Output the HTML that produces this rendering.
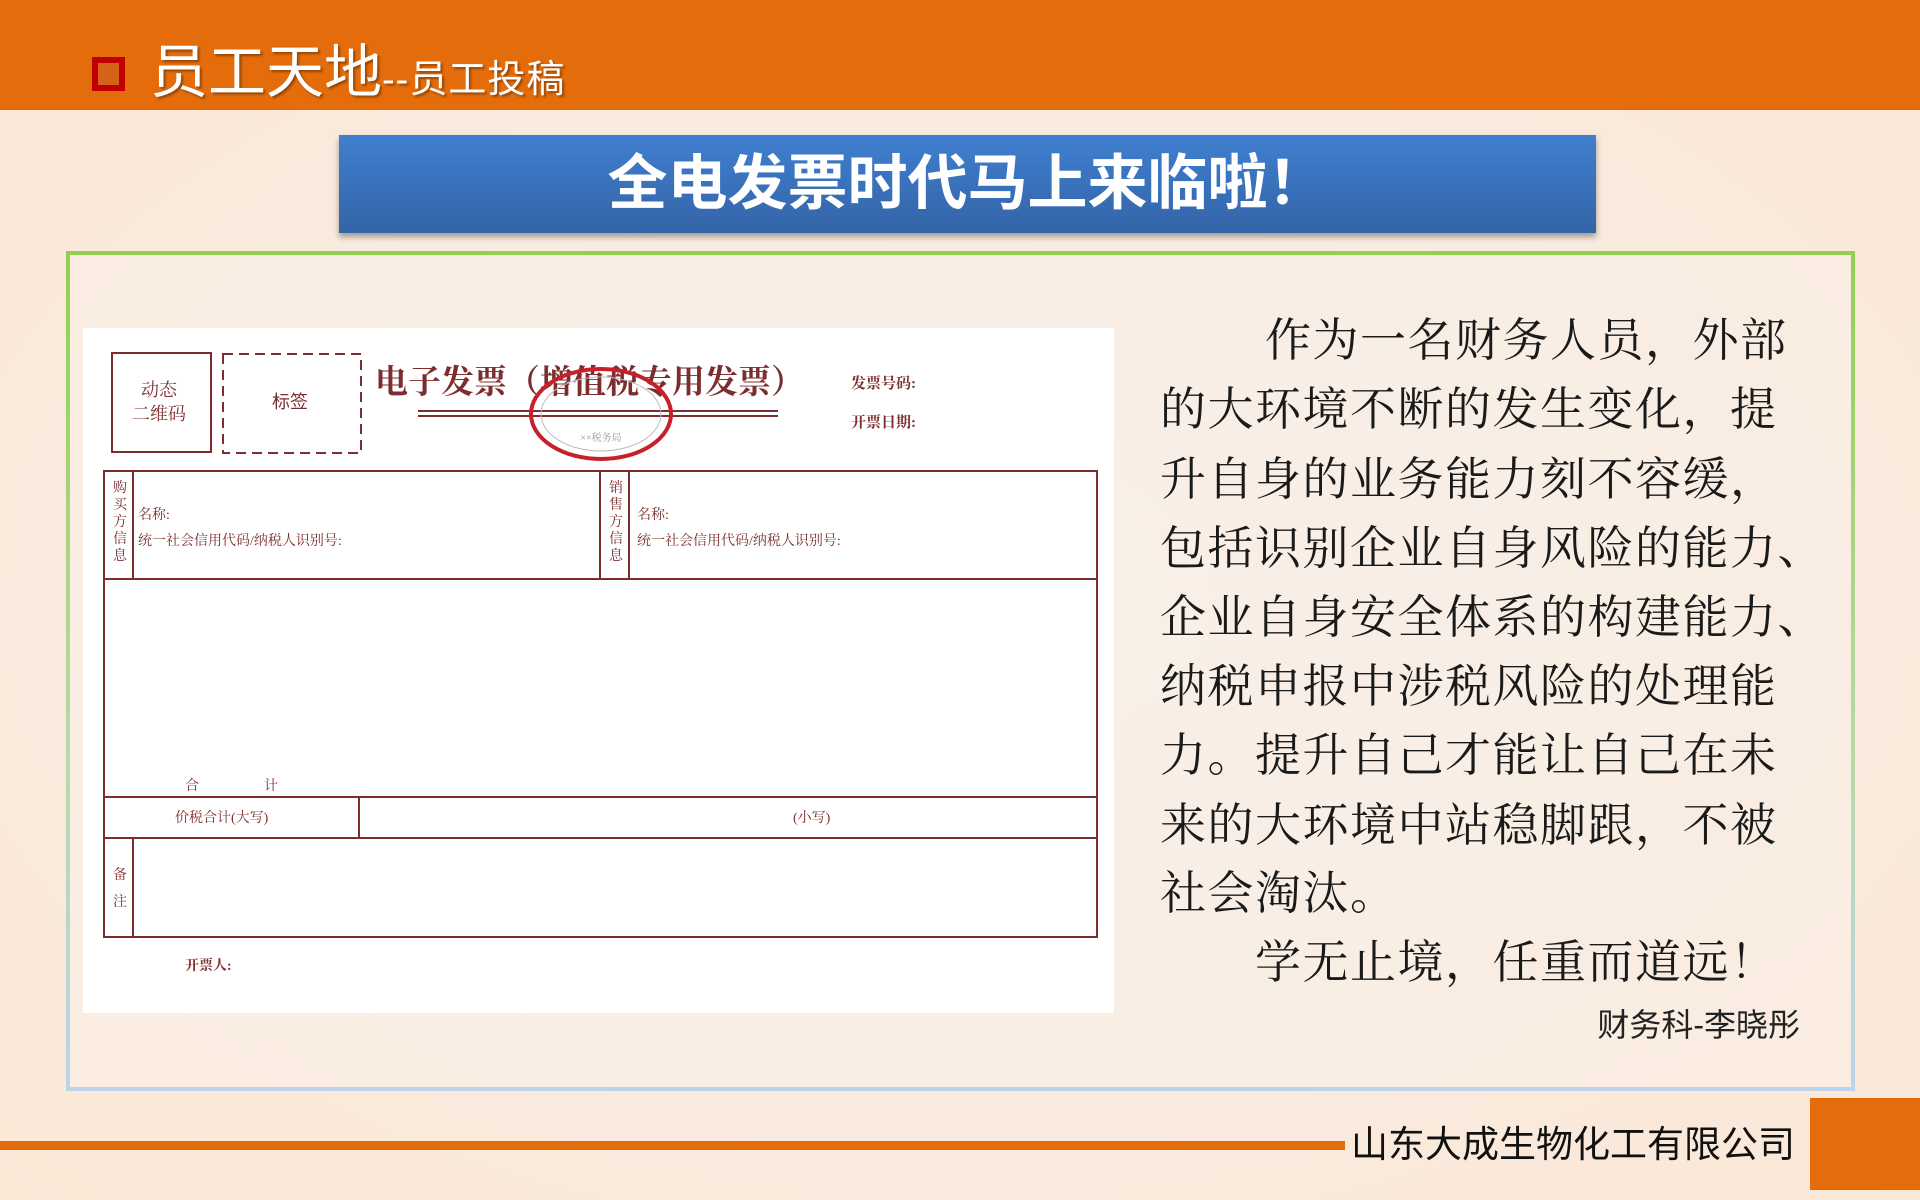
<!DOCTYPE html>
<html><head><meta charset="utf-8">
<style>
*{margin:0;padding:0;box-sizing:border-box}
html,body{width:1920px;height:1200px;overflow:hidden}
body{position:relative;background:radial-gradient(ellipse at 50% 50%,#f7efe9 0%,#f9ebdf 60%,#fbe7d6 100%);font-family:"Liberation Sans","Noto Sans CJK SC",sans-serif}
.abs{position:absolute}
.hdr{left:0;top:0;width:1920px;height:110px;background:#e46c0a}
.sq{left:92px;top:57px;width:33px;height:34px;border:6px solid #c00000;background:#d5621a}
.t1{left:150px;top:40px;font-size:58px;color:#fff;line-height:66px;white-space:nowrap;text-shadow:2px 2px 2px rgba(0,0,0,.35)}
.t1 small{font-size:38px;letter-spacing:1px}
.ban{left:339px;top:135px;width:1257px;height:98px;background:linear-gradient(#3f7fcf,#3464a8);box-shadow:0 4px 6px rgba(0,0,0,.35);color:#fff;font-size:60px;font-weight:bold;text-align:center;line-height:98px}
.box{left:66px;top:251px;width:1789px;height:840px;border:4px solid;border-image:linear-gradient(#92d050,#b9d9a8 60%,#bcd3ea) 1;background:rgba(250,240,232,.5)}
.inv{left:83px;top:328px;width:1031px;height:685px;background:#fff}
.ln{left:1160px;width:700px;height:69px;line-height:69px;font-family:"Liberation Serif","Noto Serif CJK SC",serif;font-size:46px;letter-spacing:1.5px;color:#1a1a1a;white-space:nowrap}
.sig{right:120px;top:1000px;font-size:32px;color:#222;white-space:nowrap}
.fl{left:0;top:1141px;width:1345px;height:9px;background:#e46c0a}
.ft{left:1351px;top:1122px;font-size:37px;color:#111;white-space:nowrap;line-height:46px}
.fr{left:1810px;top:1098px;width:110px;height:92px;background:#e46c0a}
</style></head><body>
<div class="abs hdr"></div>
<div class="abs sq"></div>
<div class="abs t1">员工天地<small>--员工投稿</small></div>
<div class="abs ban">全电发票时代马上来临啦！</div>
<div class="abs box"></div>
<div class="abs inv">
<svg width="1031" height="685" viewBox="83 328 1031 685" style="font-family:'Liberation Serif','Noto Serif CJK SC',serif" fill="#7c2e2e">
<g stroke="#7c2e2e" stroke-width="2" fill="none">
<rect x="112" y="353" width="99" height="99"/>
<rect x="223" y="354" width="138" height="99" stroke-dasharray="10,6"/>
<line x1="418" y1="411" x2="778" y2="411"/><line x1="418" y1="416" x2="778" y2="416"/>
<rect x="104" y="471" width="993" height="466"/>
<line x1="104" y1="579" x2="1097" y2="579"/>
<line x1="104" y1="797" x2="1097" y2="797"/>
<line x1="104" y1="838" x2="1097" y2="838"/>
<line x1="133" y1="471" x2="133" y2="579"/>
<line x1="600" y1="471" x2="600" y2="579"/>
<line x1="629" y1="471" x2="629" y2="579"/>
<line x1="359" y1="797" x2="359" y2="838"/>
<line x1="133" y1="838" x2="133" y2="937"/>
</g>
<text x="159" y="396" font-size="18" text-anchor="middle">动态</text>
<text x="159" y="420" font-size="18" text-anchor="middle">二维码</text>
<text x="290" y="408" font-size="18" text-anchor="middle" font-family="Liberation Sans,Noto Sans CJK SC,sans-serif">标签</text>
<text x="375" y="393" font-size="33" font-weight="bold">电子发票（增值税专用发票）</text>
<ellipse cx="601" cy="414" rx="70" ry="45" stroke="#c8202a" stroke-width="4" fill="none"/>
<ellipse cx="601" cy="414" rx="60" ry="37" stroke="#bbb" stroke-width="1" fill="none"/>
<text x="601" y="441" font-size="10" fill="#999" text-anchor="middle">××税务局</text>
<text x="851" y="388" font-size="15" font-weight="bold">发票号码:</text>
<text x="851" y="427" font-size="15" font-weight="bold">开票日期:</text>
<g font-size="14">
<text x="113" y="492">购</text><text x="113" y="509">买</text><text x="113" y="526">方</text><text x="113" y="543">信</text><text x="113" y="560">息</text>
<text x="609" y="492">销</text><text x="609" y="509">售</text><text x="609" y="526">方</text><text x="609" y="543">信</text><text x="609" y="560">息</text>
<text x="138" y="519">名称:</text><text x="138" y="545">统一社会信用代码/纳税人识别号:</text>
<text x="637" y="519">名称:</text><text x="637" y="545">统一社会信用代码/纳税人识别号:</text>
<text x="185" y="790">合</text><text x="264" y="790">计</text>
<text x="175" y="822">价税合计(大写)</text>
<text x="793" y="822">(小写)</text>
<text x="113" y="879">备</text><text x="113" y="906">注</text>
<text x="185" y="970" font-weight="bold">开票人:</text>
</g>
</svg>
</div>
<div class="abs ln" style="top:306px;padding-left:105px">作为一名财务人员，外部</div>
<div class="abs ln" style="top:375px">的大环境不断的发生变化，提</div>
<div class="abs ln" style="top:445px">升自身的业务能力刻不容缓，</div>
<div class="abs ln" style="top:514px">包括识别企业自身风险的能力、</div>
<div class="abs ln" style="top:583px">企业自身安全体系的构建能力、</div>
<div class="abs ln" style="top:652px">纳税申报中涉税风险的处理能</div>
<div class="abs ln" style="top:721px">力。提升自己才能让自己在未</div>
<div class="abs ln" style="top:791px">来的大环境中站稳脚跟，不被</div>
<div class="abs ln" style="top:859px">社会淘汰。</div>
<div class="abs ln" style="top:928px;padding-left:95px">学无止境，任重而道远！</div>
<div class="abs sig">财务科-李晓彤</div>
<div class="abs fl"></div>
<div class="abs ft">山东大成生物化工有限公司</div>
<div class="abs fr"></div>
</body></html>
